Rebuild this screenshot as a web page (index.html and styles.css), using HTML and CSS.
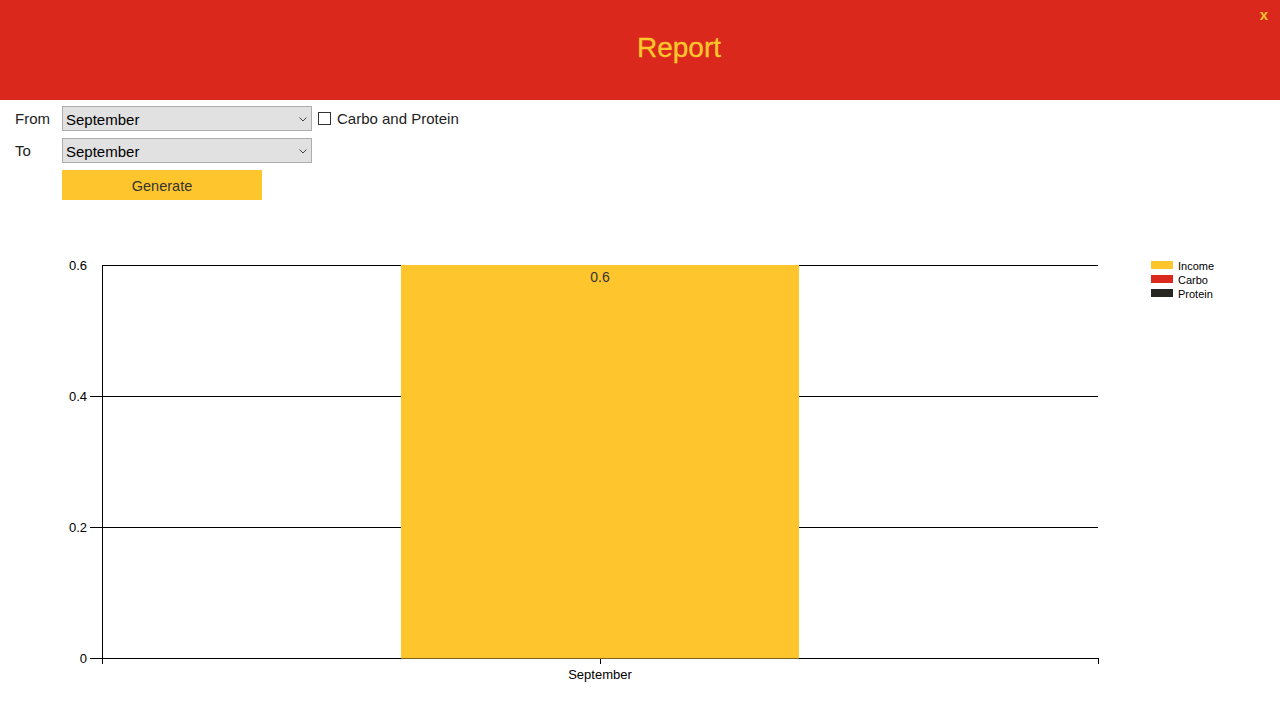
FILE: index.html
```html
<!DOCTYPE html>
<html>
<head>
<meta charset="utf-8">
<title>Report</title>
<link rel="stylesheet" href="styles.css">
</head>
<body>
<header class="header">
  <h1 class="title">Report</h1>
  <button class="close">x</button>
</header>
<form class="form">
  <label class="lbl">From</label>
  <div class="select">
    <select><option>September</option></select>
    <svg class="chev" width="8" height="5" viewBox="0 0 8 5"><path d="M0.5 0.5 L4 4 L7.5 0.5" fill="none" stroke="#444" stroke-width="1"/></svg>
  </div>
  <label class="check"><span class="box"></span>Carbo and Protein</label>
  <label class="lbl">To</label>
  <div class="select">
    <select><option>September</option></select>
    <svg class="chev" width="8" height="5" viewBox="0 0 8 5"><path d="M0.5 0.5 L4 4 L7.5 0.5" fill="none" stroke="#444" stroke-width="1"/></svg>
  </div>
  <span></span>
  <span></span>
  <button type="button" class="generate">Generate</button>
</form>
<svg class="chart" width="1280" height="520" viewBox="0 200 1280 520">
  <g stroke="#000" stroke-width="1" fill="none">
    <line x1="102" y1="265.5" x2="1098" y2="265.5"/>
    <line x1="90" y1="396.5" x2="1098" y2="396.5"/>
    <line x1="90" y1="527.5" x2="1098" y2="527.5"/>
    <line x1="90" y1="658.5" x2="1098" y2="658.5"/>
    <line x1="102.5" y1="265" x2="102.5" y2="664"/>
    <line x1="600.5" y1="658" x2="600.5" y2="664"/>
    <line x1="1098.5" y1="658" x2="1098.5" y2="664"/>
  </g>
  <rect x="401" y="265" width="398" height="393.5" fill="#FFC52C"/>
  <g class="ylab" text-anchor="end">
    <text x="87" y="270">0.6</text>
    <text x="87" y="401">0.4</text>
    <text x="87" y="532">0.2</text>
    <text x="87" y="663">0</text>
  </g>
  <text class="xlab" x="600" y="679" text-anchor="middle">September</text>
  <text class="barlab" x="600" y="282" text-anchor="middle">0.6</text>
  <g class="legend">
    <rect x="1151" y="261" width="22" height="8" fill="#FFC52C"/>
    <rect x="1151" y="275" width="22" height="8" fill="#DA291C"/>
    <rect x="1151" y="289" width="22" height="8" fill="#27251F"/>
    <text x="1178" y="270">Income</text>
    <text x="1178" y="284">Carbo</text>
    <text x="1178" y="298">Protein</text>
  </g>
</svg>
</body>
</html>
```
FILE: styles.css
```css
* { box-sizing: border-box; }
html, body { margin: 0; padding: 0; background: #fff; }
body {
  width: 1280px;
  height: 720px;
  overflow: hidden;
  font-family: "Liberation Sans", Arial, sans-serif;
}
.header {
  position: relative;
  height: 100px;
  background: #DA291C;
  display: flex;
  align-items: center;
  justify-content: center;
  padding-left: 78px;
  padding-bottom: 4px;
}
.title {
  margin: 0;
  font-size: 28px;
  line-height: 32px;
  font-weight: normal;
  color: #FFC72C;
  -webkit-text-stroke: 0.3px #FFC72C;
}
.close {
  position: absolute;
  top: 5px;
  right: 12px;
  background: none;
  border: 0;
  padding: 0;
  color: #FFC72C;
  font-family: "Liberation Sans", Arial, sans-serif;
  font-weight: bold;
  font-size: 15px;
  line-height: 20px;
}
.form {
  display: grid;
  grid-template-columns: 47px 250px auto;
  grid-auto-rows: auto;
  row-gap: 7px;
  justify-content: start;
  padding: 6px 0 0 15px;
  margin: 0;
  height: 100px;
}
.lbl {
  font-size: 15px;
  color: #222;
  display: flex;
  align-items: center;
}
.select {
  position: relative;
  width: 250px;
  height: 25px;
}
.select select {
  appearance: none;
  -webkit-appearance: none;
  width: 100%;
  height: 100%;
  margin: 0;
  border: 1px solid #ADADAD;
  border-radius: 0;
  background: #E1E1E1;
  padding: 2px 0 0 3px;
  font-family: "Liberation Sans", Arial, sans-serif;
  font-size: 15px;
  color: #000;
  outline: none;
}
.chev {
  position: absolute;
  right: 5px;
  top: 11px;
  pointer-events: none;
}
.check {
  display: flex;
  align-items: center;
  font-size: 15px;
  color: #222;
  padding-left: 6px;
}
.box {
  width: 13px;
  height: 13px;
  border: 1px solid #333;
  background: #fff;
  margin-right: 6px;
}
.generate {
  grid-column: 2;
  width: 200px;
  height: 30px;
  border: 0;
  border-radius: 0;
  background: #FFC52C;
  color: #333;
  font-family: "Liberation Sans", Arial, sans-serif;
  font-size: 14.5px;
  padding: 2px 0 0 0;
}
.chart {
  display: block;
}
.ylab text, .xlab {
  font-family: "Liberation Sans", Arial, sans-serif;
  font-size: 13px;
  fill: #000;
}
.barlab {
  font-family: "Liberation Sans", Arial, sans-serif;
  font-size: 14px;
  fill: #333;
}
.legend text {
  font-family: "Liberation Sans", Arial, sans-serif;
  font-size: 11px;
  fill: #000;
}
```
